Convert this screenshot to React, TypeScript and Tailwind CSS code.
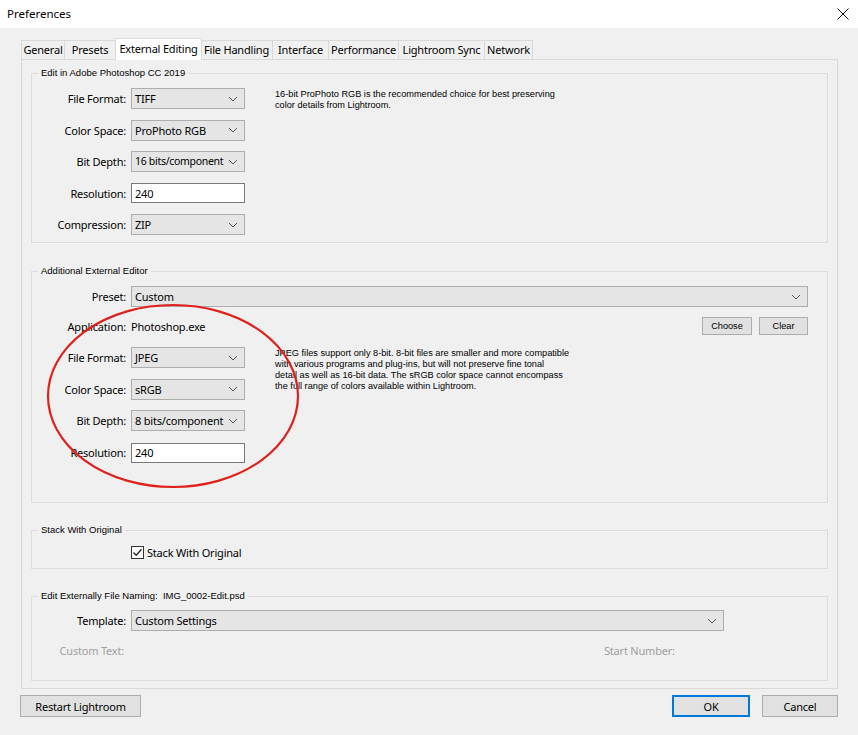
import React from "react";

const Chevron = () => (
  <svg width="10" height="6" viewBox="0 0 10 6" className="shrink-0">
    <polyline points="1,1 5,5 9,1" fill="none" stroke="#555" strokeWidth="1" />
  </svg>
);

const T = "text-[11px] tracking-[-0.2px] leading-none whitespace-nowrap";

function Select({ value, w, tight }: { value: string; w: string; tight?: boolean }) {
  return (
    <div className={`${w} h-[21px] bg-[#e5e5e5] border border-[#adadad] flex items-center justify-between pl-[3px] pr-[6px]`}>
      <span className={tight ? "text-[10.5px] tracking-[-0.3px] leading-none whitespace-nowrap" : T}>{value}</span>
      <Chevron />
    </div>
  );
}

function Input({ value }: { value: string }) {
  return (
    <div className="w-[114px] h-[20px] bg-white border border-[#7a7a7a] flex items-center pl-[3px]">
      <span className={T}>{value}</span>
    </div>
  );
}

function Row({ label, children }: { label: string; children?: React.ReactNode }) {
  return (
    <div className="flex items-center gap-[5px] h-[21px]">
      <div className={`w-[94px] shrink-0 text-right ${T}`}>{label}</div>
      {children}
    </div>
  );
}

function Group({ title, className, children }: { title: React.ReactNode; className: string; children: React.ReactNode }) {
  return (
    <div className={`relative border border-[#dcdcdc] ${className}`}>
      <div className="absolute left-[6px] top-[-7px] px-[3px] bg-[#f0f0f0] font-['Liberation_Sans',sans-serif] text-[9.5px] leading-[12px] text-black whitespace-pre">
        {title}
      </div>
      {children}
    </div>
  );
}

const tabs = [
  { t: "General", w: "w-[44px]" },
  { t: "Presets", w: "w-[52px]" },
  { t: "External Editing", w: "w-[87px]", sel: true },
  { t: "File Handling", w: "w-[73px]" },
  { t: "Interface", w: "w-[57px]" },
  { t: "Performance", w: "w-[71px]" },
  { t: "Lightroom Sync", w: "w-[87px]" },
  { t: "Network", w: "w-[49px]" },
];

export default function App() {
  const small = "font-['Liberation_Sans',sans-serif] text-[9.2px] leading-[11px] text-black whitespace-nowrap";
  return (
    <div className="relative w-[858px] h-[735px] bg-[#f0f0f0] font-['Noto_Sans','Open_Sans',sans-serif] text-black overflow-hidden">
      {/* title bar */}
      <div className="h-[28px] bg-white flex items-center justify-between pl-[7px] pr-[9px]">
        <span className="text-[11.5px] leading-none">Preferences</span>
        <svg width="12" height="12" viewBox="0 0 12 12">
          <path d="M0.5 0.5 L11.5 11.5 M11.5 0.5 L0.5 11.5" stroke="#111" strokeWidth="1" />
        </svg>
      </div>

      <div className="pl-[21px] pr-[20px] pt-[9px]">
        {/* tabs */}
        <div className="flex items-end h-[22px]">
          {tabs.map((tb) =>
            tb.sel ? (
              <div
                key={tb.t}
                className={`${tb.w} h-[22px] -mx-[1px] bg-white border border-b-0 border-[#d9d9d9] flex items-center justify-center ${T} relative z-10 -mb-[1px] pb-[3px]`}
              >
                {tb.t}
              </div>
            ) : (
              <div
                key={tb.t}
                className={`${tb.w} h-[19px] bg-[#f0f0f0] border border-b-0 border-[#d9d9d9] -ml-[1px] first:ml-0 flex items-center justify-center pb-[2px] ${T}`}
              >
                {tb.t}
              </div>
            )
          )}
        </div>

        {/* panel */}
        <div className="h-[630px] border border-[#d9d9d9] bg-[#f0f0f0] px-[9px] pt-[13px] flex flex-col">
          {/* group 1 */}
          <Group title="Edit in Adobe Photoshop CC 2019" className="pt-[14px] pb-[7px]">
            <div className="flex">
              <div className="flex flex-col gap-[10.5px]">
                <Row label="File Format:"><Select value="TIFF" w="w-[114px]" /></Row>
                <Row label="Color Space:"><Select value="ProPhoto RGB" w="w-[114px]" /></Row>
                <Row label="Bit Depth:"><Select value="16 bits/component" w="w-[114px]" tight /></Row>
                <Row label="Resolution:"><Input value="240" /></Row>
                <Row label="Compression:"><Select value="ZIP" w="w-[114px]" /></Row>
              </div>
              <div className={`${small} ml-[30px] mt-[1px]`}>
                16-bit ProPhoto RGB is the recommended choice for best preserving<br />color details from Lightroom.
              </div>
            </div>
          </Group>

          {/* group 2 */}
          <Group title="Additional External Editor" className="mt-[28px] pt-[14px] pb-[39px] pr-[19px]">
            <Row label="Preset:">
              <Select value="Custom" w="flex-1" />
            </Row>
            <div className="flex items-center h-[20px] mt-[9px]">
              <div className={`w-[94px] text-right ${T}`}>Application:</div>
              <div className={`ml-[5px] ${T}`}>Photoshop.exe</div>
              <div className="ml-auto flex gap-[7px]">
                <div className={`w-[50px] h-[18px] bg-[#e1e1e1] border border-[#adadad] flex items-center justify-center ${small}`}>Choose</div>
                <div className={`w-[49px] h-[18px] bg-[#e1e1e1] border border-[#adadad] flex items-center justify-center ${small}`}>Clear</div>
              </div>
            </div>
            <div className="flex mt-[11px]">
              <div className="flex flex-col gap-[10.7px]">
                <Row label="File Format:"><Select value="JPEG" w="w-[114px]" /></Row>
                <Row label="Color Space:"><Select value="sRGB" w="w-[114px]" /></Row>
                <Row label="Bit Depth:"><Select value="8 bits/component" w="w-[114px]" /></Row>
                <Row label="Resolution:"><Input value="240" /></Row>
              </div>
              <div className={`${small} ml-[30px] mt-[1px]`}>
                JPEG files support only 8-bit. 8-bit files are smaller and more compatible<br />
                with various programs and plug-ins, but will not preserve fine tonal<br />
                detail as well as 16-bit data. The sRGB color space cannot encompass<br />
                the full range of colors available within Lightroom.
              </div>
            </div>
          </Group>

          {/* group 3 */}
          <Group title="Stack With Original" className="mt-[27px] pt-[11px] pb-[6px]">
            <div className="flex items-center h-[20px] pl-[99px] gap-[3px]">
              <div className="w-[13px] h-[13px] border border-[#333] bg-white flex items-center justify-center">
                <svg width="11" height="11" viewBox="0 0 11 11">
                  <polyline points="1.5,5.5 4.2,8.3 9.5,2.3" fill="none" stroke="#222" strokeWidth="1.3" />
                </svg>
              </div>
              <span className={T}>Stack With Original</span>
            </div>
          </Group>

          {/* group 4 */}
          <Group title={"Edit Externally File Naming:  IMG_0002-Edit.psd"} className="mt-[27px] pt-[13px] pb-[20px]">
            <Row label="Template:">
              <Select value="Custom Settings" w="w-[593px]" />
            </Row>
            <div className="flex items-center h-[20px] mt-[9px]">
              <div className={`w-[92px] text-right ${T} text-[#a0a0a0]`}>Custom Text:</div>
              <div className={`ml-[480px] ${T} text-[#a0a0a0]`}>Start Number:</div>
            </div>
          </Group>
        </div>

        {/* bottom buttons */}
        <div className="flex items-center mt-[6px] -ml-[1px]">
          <div className={`w-[121px] h-[22px] bg-[#e1e1e1] border border-[#adadad] flex items-center justify-center ${T}`}>
            Restart Lightroom
          </div>
          <div className={`ml-auto w-[78px] h-[22px] bg-[#e1e1e1] border-2 border-[#0078d7] flex items-center justify-center ${T}`}>
            OK
          </div>
          <div className={`ml-[12px] w-[76px] h-[22px] bg-[#e1e1e1] border border-[#adadad] flex items-center justify-center ${T}`}>
            Cancel
          </div>
        </div>
      </div>

      {/* red annotation circle */}
      <svg className="absolute left-0 top-0 pointer-events-none" width="858" height="735">
        <ellipse cx="173" cy="396" rx="125" ry="91" fill="none" stroke="#e0201b" strokeWidth="2.2" />
      </svg>
    </div>
  );
}
